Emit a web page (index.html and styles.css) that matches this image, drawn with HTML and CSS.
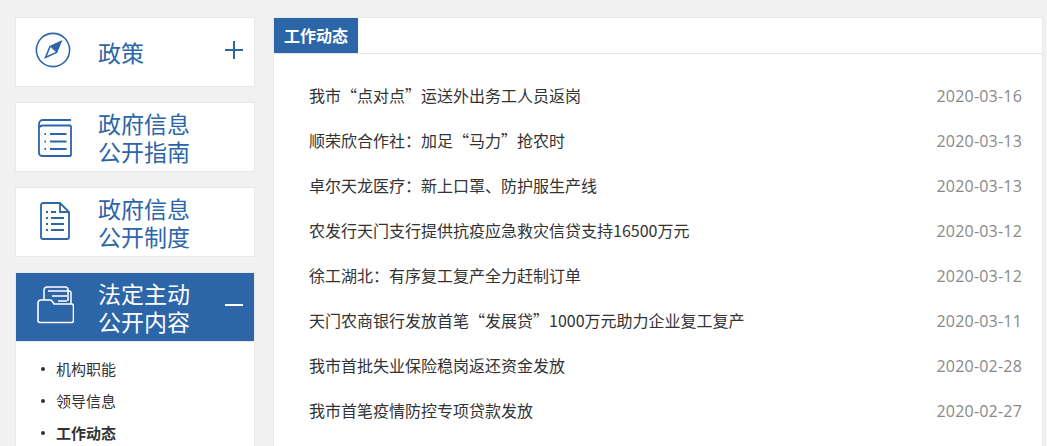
FILE: index.html
```html
<!DOCTYPE html>
<html lang="zh-CN">
<head>
<meta charset="utf-8">
<title>工作动态</title>
<link rel="stylesheet" href="styles.css">
</head>
<body>
<div class="page">
  <aside class="side">
    <a class="card">
      <span class="ico ico-compass"><svg width="36" height="36" viewBox="0 0 36 36" fill="none" stroke="currentColor" stroke-width="1.6"><circle cx="18" cy="18" r="16.6"/><path d="M26 9.500 L21.500 20.500 L10.500 25.500 L15 14.500 Z"/><path d="M26 9.500 L15 14.500 L21.500 20.500 Z" fill="currentColor" stroke="none"/></svg></span>
      <span class="label">政策</span>
      <svg class="sign" width="18" height="18" viewBox="0 0 18 18"><path d="M0 9h18M9 0v18" stroke="currentColor" stroke-width="2"/></svg>
    </a>
    <a class="card">
      <span class="ico"><svg width="34" height="39" viewBox="0 0 34 39" fill="none" stroke="currentColor" stroke-width="1.800"><path d="M33 38H4a3 3 0 0 1-3-3V6a4 4 0 0 1 4-4h28"/><path d="M33 7.500H5M1 9.500c1-1.500 2.500-2 4-2M33 7.500V38"/><path d="M6.500 16h1.500M6.500 23.500h1.500M6.500 31h1.500M12 16h16.500M12 23.500h16.500M12 31h16.500" stroke-width="2"/></svg></span>
      <span class="label">政府信息<br>公开指南</span>
    </a>
    <a class="card">
      <span class="ico ico-up"><svg width="30" height="38" viewBox="0 0 30 38" fill="none" stroke="currentColor" stroke-width="1.800"><path d="M20 1H3a2 2 0 0 0-2 2v32a2 2 0 0 0 2 2h24a2 2 0 0 0 2-2V10z"/><path d="M20 1v9h9"/><path d="M6 10h2M6 16h2M6 22h2M6 28h2M11 16h13M11 22h13M11 28h13M11 10h5" stroke-width="2"/></svg></span>
      <span class="label">政府信息<br>公开制度</span>
    </a>
    <div class="group">
      <a class="card active">
        <span class="ico ico-lift"><svg width="37" height="38" viewBox="0 0 37 38" fill="none" stroke="currentColor" stroke-width="1.500"><path d="M7 14V4a3 3 0 0 1 3-3h18a3 3 0 0 1 3 3v11"/><path d="M11 5h21a2 2 0 0 1 2 2v11"/><path d="M15 10h15M21 15h9"/><path d="M1 34V17a3 3 0 0 1 3-3h9a3 3 0 0 1 2.500 1.500L17 18h17.500a2 2 0 0 1 2 2v14.500a2 2 0 0 1-2 2H3a2 2 0 0 1-2-2.500z" stroke-width="1.600"/></svg></span>
        <span class="label">法定主动<br>公开内容</span>
        <svg class="sign" width="18" height="18" viewBox="0 0 18 18"><path d="M0 9h18" stroke="currentColor" stroke-width="2"/></svg>
      </a>
      <ul class="sub">
        <li>机构职能</li>
        <li>领导信息</li>
        <li class="current">工作动态</li>
      </ul>
    </div>
  </aside>
  <main class="panel">
    <div class="head"><h2 class="tab">工作动态</h2></div>
    <ul class="news">
      <li><span>我市“点对点”运送外出务工人员返岗</span><time>2020-03-16</time></li>
      <li><span>顺荣欣合作社：加足“马力”抢农时</span><time>2020-03-13</time></li>
      <li><span>卓尔天龙医疗：新上口罩、防护服生产线</span><time>2020-03-13</time></li>
      <li><span>农发行天门支行提供抗疫应急救灾信贷支持16500万元</span><time>2020-03-12</time></li>
      <li><span>徐工湖北：有序复工复产全力赶制订单</span><time>2020-03-12</time></li>
      <li><span>天门农商银行发放首笔“发展贷”1000万元助力企业复工复产</span><time>2020-03-11</time></li>
      <li><span>我市首批失业保险稳岗返还资金发放</span><time>2020-02-28</time></li>
      <li><span>我市首笔疫情防控专项贷款发放</span><time>2020-02-27</time></li>
    </ul>
  </main>
</div>
</body>
</html>
```

FILE: styles.css
```css
* { box-sizing: border-box; }
html, body { margin: 0; height: 100%; overflow: hidden; }
body {
  background: #f1f1f1;
  font-family: "Noto Sans CJK SC", "Noto Sans", sans-serif;
  color: #333;
}
.page {
  display: flex;
  align-items: flex-start;
  gap: 18px;
  padding: 17px 4px 0 15px;
  height: 100%;
  overflow: hidden;
}
.side {
  width: 240px;
  flex: none;
  display: flex;
  flex-direction: column;
  gap: 15px;
}
.card {
  height: 70px;
  display: flex;
  align-items: center;
  padding-right: 11px;
  background: #fff;
  border: 1px solid #e8e8e8;
  color: #2c65a8;
}
.ico {
  width: 82px;
  flex: none;
  display: flex;
  justify-content: center;
  padding-right: 4px;
}
.ico-compass { padding-right: 8px; margin-top: -4px; }
.ico-up { margin-top: -2px; }
.ico-lift { margin-top: -4px; }
.label {
  flex: 1;
  font-family: "Liberation Sans", "Noto Sans CJK SC", sans-serif;
  font-size: 23px;
  line-height: 28px;
  margin-top: 3px;
}
.sign { flex: none; margin-top: -4px; }
.group {
  background: #fff;
  border: 1px solid #e8e8e8;
  border-top: 0;
  min-height: 400px;
}
.active {
  margin: 0 -1px;
  background: #2c65a8;
  border-color: #e8e8e8;
  color: #fff;
}
.sub {
  list-style: none;
  margin: 0;
  padding: 10px 0 0 25px;
}
.sub li {
  display: flex;
  align-items: center;
  gap: 11px;
  height: 32px;
  font-size: 15px;
  color: #333;
}
.sub li::before {
  content: "";
  width: 4px;
  height: 4px;
  margin-top: 1px;
  border-radius: 50%;
  background: #333;
}
.sub .current { font-weight: 700; }
.panel {
  flex: 1;
  height: 500px;
  background: #fff;
  border: 1px solid #e8e8e8;
}
.head { height: 36px; border-bottom: 1px solid #e4e4e4; }
.tab {
  width: 84px;
  height: 35px;
  margin: 0;
  background: #2c65a8;
  color: #fff;
  font-size: 16px;
  font-weight: 700;
  line-height: 34px;
  text-align: center;
}
.news {
  list-style: none;
  margin: 0;
  padding: 19px 20px 0 35px;
}
.news li {
  display: flex;
  justify-content: space-between;
  align-items: center;
  height: 45px;
  font-size: 16px;
  line-height: 22px;
  color: #333;
}
.news li span { margin-top: -1px; }
.news time {
  font-family: "Open Sans", "Noto Sans", sans-serif;
  font-size: 16px;
  letter-spacing: 0.2px;
  color: #888;
}
```
